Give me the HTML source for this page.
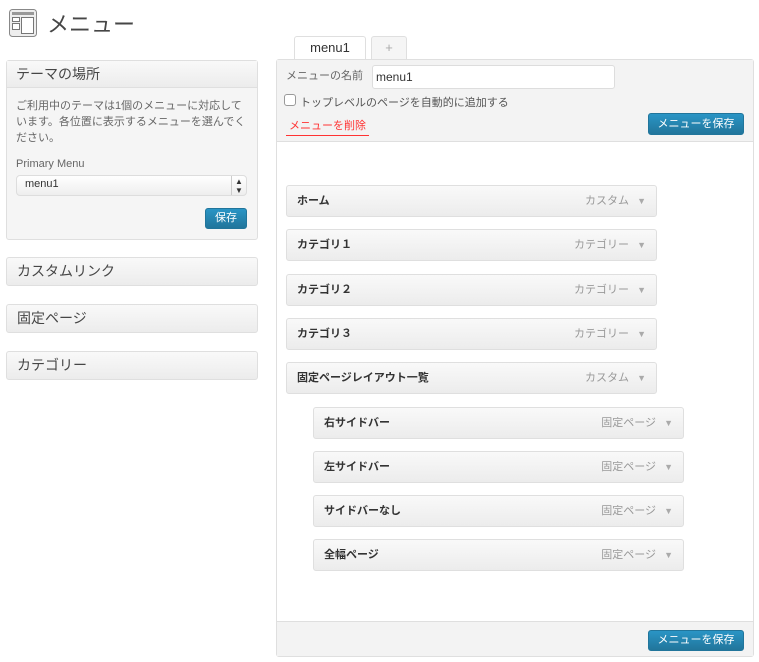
<!DOCTYPE html>
<html><head><meta charset="utf-8"><style>
*{box-sizing:border-box;margin:0;padding:0}
body{width:759px;height:662px;background:#fff;font-family:"Liberation Sans","Noto Sans CJK JP",sans-serif;color:#333;position:relative;overflow:hidden}
.a{position:absolute}
.box{position:absolute;border:1px solid #dfdfdf;border-radius:3px;background:linear-gradient(#f9f9f9,#ececec);font-size:14px;color:#464646;padding:6px 10px}
.item{position:absolute;width:371px;height:32px;border:1px solid #dfdfdf;border-radius:3px;background:linear-gradient(#f9f9f9,#ececec);font-size:11px;font-weight:bold;color:#333;padding:0 10px;line-height:30px}
.item span{position:absolute;right:27px;top:0;font-weight:normal;color:#999}
.item i{position:absolute;right:10px;top:0;font-style:normal;font-size:9px;color:#aaa}
.btn{position:absolute;background:linear-gradient(#2a95c5,#21759b);border:1px solid #21759b;border-radius:3px;color:#fff;font-size:11px;text-align:center}
</style></head><body>
<svg class="a" style="left:9px;top:9px" width="28" height="28" viewBox="0 0 28 28"><rect x="0.5" y="0.5" width="27" height="27" rx="3" fill="#eee" stroke="#888"/><rect x="3" y="3" width="22" height="3" fill="#999"/><rect x="3.5" y="8.5" width="7" height="4" fill="#fff" stroke="#777"/><rect x="3.5" y="14.5" width="7" height="6" fill="#fff" stroke="#777"/><rect x="12.5" y="8.5" width="12" height="16" fill="#fff" stroke="#777"/></svg>
<div class="a" style="left:47px;top:7px;font-size:22px;color:#464646">メニュー</div>
<div class="a" style="left:294px;top:36px;width:72px;height:25px;border:1px solid #dfdfdf;border-bottom:none;background:#fff;border-radius:3px 3px 0 0;text-align:center;font-size:13px;line-height:22px">menu1</div>
<div class="a" style="left:371px;top:36px;width:36px;height:24px;border:1px solid #dfdfdf;border-bottom:none;background:#f5f5f5;border-radius:3px 3px 0 0;text-align:center;font-size:13px;color:#aaa;line-height:22px">+</div>

<div class="a" style="left:6px;top:60px;width:252px;height:180px;border:1px solid #dfdfdf;border-radius:3px;background:#f5f5f5"></div>
<div class="a" style="left:7px;top:61px;width:250px;height:27px;background:linear-gradient(#f9f9f9,#ececec);border-bottom:1px solid #dfdfdf;font-size:14px;color:#464646;padding:3px 9px">テーマの場所</div>
<div class="a" style="left:16px;top:98px;width:236px;font-size:11px;line-height:16px;color:#666">ご利用中のテーマは1個のメニューに対応しています。各位置に表示するメニューを選んでください。</div>
<div class="a" style="left:16px;top:158px;font-size:11px;color:#666">Primary Menu</div>
<div class="a" style="left:16px;top:175px;width:231px;height:21px;border:1px solid #ddd;border-radius:4px;background:linear-gradient(#fff,#eee);font-size:11px;padding:2px 8px">menu1<span style="position:absolute;right:0;top:0;width:15px;height:19px;border-left:1px solid #ccc;font-size:8px;text-align:center;line-height:9px;padding-top:1px">▲<br>▼</span></div>
<div class="btn" style="left:205px;top:208px;width:42px;height:21px;line-height:19px">保存</div>

<div class="box" style="left:6px;top:257px;width:252px;height:29px;padding:3px 10px">カスタムリンク</div>
<div class="box" style="left:6px;top:304px;width:252px;height:29px;padding:3px 10px">固定ページ</div>
<div class="box" style="left:6px;top:351px;width:252px;height:29px;padding:3px 10px">カテゴリー</div>

<div class="a" style="left:276px;top:59px;width:478px;height:598px;border:1px solid #dfdfdf;border-radius:3px;background:#fff"></div>
<div class="a" style="left:277px;top:60px;width:476px;height:82px;background:#f3f3f3;border-bottom:1px solid #dfdfdf"></div>
<div class="a" style="left:277px;top:621px;width:476px;height:35px;background:#f3f3f3;border-top:1px solid #dfdfdf"></div>
<div class="a" style="left:286px;top:67px;font-size:11px;color:#666">メニューの名前</div>
<div class="a" style="left:372px;top:65px;width:243px;height:24px;border:1px solid #ddd;background:#fff;border-radius:3px;font-size:12px;padding:4px 3px">menu1</div>
<div class="a" style="left:284px;top:94px;width:12px;height:12px;border:1px solid #999;border-radius:3px;background:#fff"></div>
<div class="a" style="left:300px;top:94px;font-size:11px;color:#555">トップレベルのページを自動的に追加する</div>
<div class="a" style="left:286px;top:117px;font-size:11px;color:#f33;border-bottom:1px solid #f33;padding:0 3px 2px">メニューを削除</div>
<div class="btn" style="left:648px;top:113px;width:96px;height:22px;line-height:20px">メニューを保存</div>
<div class="btn" style="left:648px;top:630px;width:96px;height:21px;line-height:19px">メニューを保存</div>

<div class="item" style="left:286px;top:185px">ホーム<span>カスタム</span><i>▼</i></div>
<div class="item" style="left:286px;top:229px">カテゴリ１<span>カテゴリー</span><i>▼</i></div>
<div class="item" style="left:286px;top:274px">カテゴリ２<span>カテゴリー</span><i>▼</i></div>
<div class="item" style="left:286px;top:318px">カテゴリ３<span>カテゴリー</span><i>▼</i></div>
<div class="item" style="left:286px;top:362px">固定ページレイアウト一覧<span>カスタム</span><i>▼</i></div>
<div class="item" style="left:313px;top:407px">右サイドバー<span>固定ページ</span><i>▼</i></div>
<div class="item" style="left:313px;top:451px">左サイドバー<span>固定ページ</span><i>▼</i></div>
<div class="item" style="left:313px;top:495px">サイドバーなし<span>固定ページ</span><i>▼</i></div>
<div class="item" style="left:313px;top:539px">全幅ページ<span>固定ページ</span><i>▼</i></div>
</body></html>
